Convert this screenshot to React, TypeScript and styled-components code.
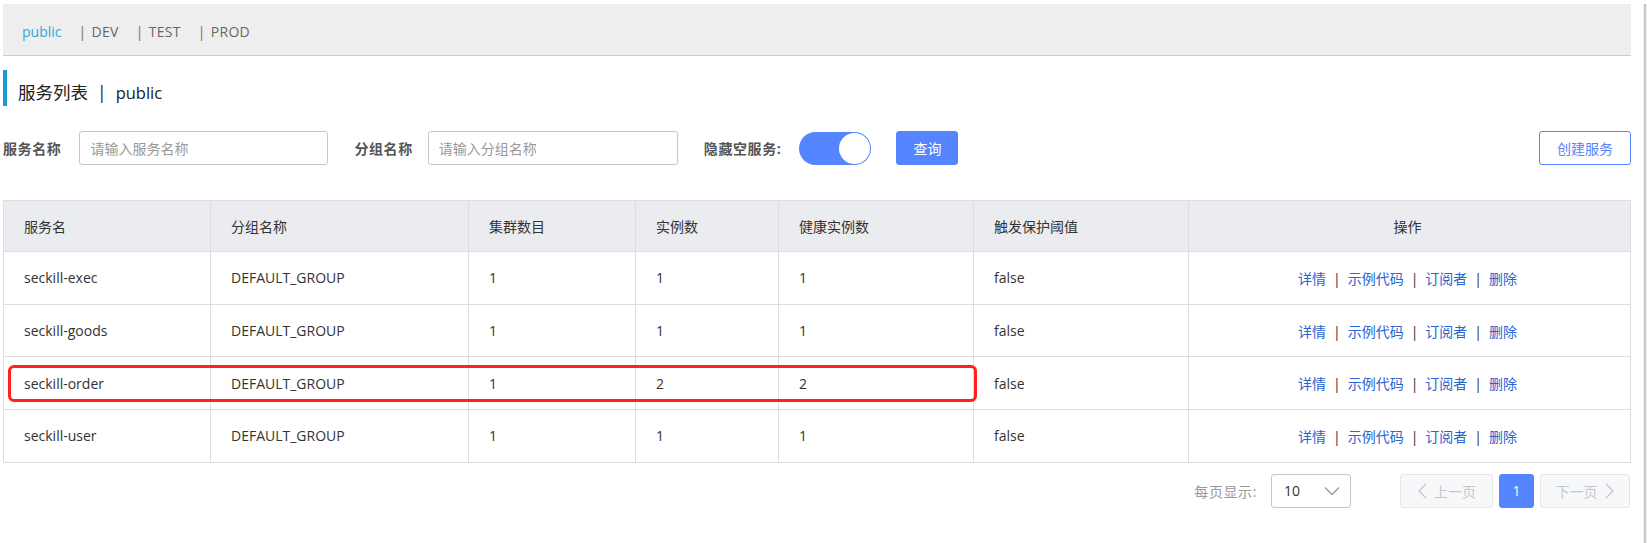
import React from 'react';
import styled, { createGlobalStyle } from 'styled-components';

const GlobalStyle = createGlobalStyle`
  html, body { margin: 0; padding: 0; background: #fff; }
  body {
    font-family: "Open Sans", "Noto Sans CJK SC", sans-serif;
    font-size: 14px;
    color: #333;
  }
  * { box-sizing: border-box; }
`;

const Page = styled.div`
  display: flex;
  width: 100%;
  height: 543px;
  overflow: hidden;
  background: #fff;
`;

const Main = styled.div`
  flex: 1;
  min-width: 0;
  padding: 4px 12px 0 3px;
`;

const Edge = styled.div`
  flex: 0 0 4px;
  margin-top: 4px;
  background: linear-gradient(to right, #f1f1f1 0 1px, #c8c8c8 1px 3px, #f1f1f1 3px 4px);
`;

const TopBar = styled.div`
  display: flex;
  align-items: center;
  gap: 17px;
  height: 52px;
  padding: 5px 0 0 19px;
  background: #eeeeee;
  border-bottom: 1px solid #cccccc;
`;

const Tab = styled.span<{ $active?: boolean }>`
  display: flex;
  align-items: center;
  font-size: 14px;
  line-height: 20px;
  letter-spacing: ${(p) => (p.$active ? '0' : '0.3px')};
  color: ${(p) => (p.$active ? '#2aa8dd' : '#666')};
  cursor: pointer;
`;

const TabPipe = styled.span`
  color: #8b6a45;
  margin-right: 5px;
`;

const Title = styled.div`
  margin-top: 14px;
  height: 36px;
  border-left: 4px solid #1a9bd7;
  padding: 10px 0 0 11px;
  font-size: 17.5px;
  line-height: 24px;
  color: #222;
`;

const TitlePipe = styled.span`
  margin: 0 9px;
`;

const TitleName = styled.span`
  font-size: 16.5px;
`;

const FilterRow = styled.div`
  display: flex;
  align-items: center;
  height: 34px;
  margin-top: 25px;
`;

const Label = styled.span<{ $gap: number }>`
  font-weight: 700;
  font-size: 14px;
  letter-spacing: 0.6px;
  color: #555;
  margin-right: ${(p) => p.$gap}px;
  white-space: nowrap;
`;

const Input = styled.input<{ $w: number }>`
  width: ${(p) => p.$w}px;
  height: 34px;
  margin-right: 26px;
  padding: 0 10px;
  border: 1px solid #c4c6cf;
  border-radius: 3px;
  font-family: inherit;
  font-size: 14px;
  color: #333;
  outline: none;
  &::placeholder { color: #999; }
`;

const Switch = styled.div`
  display: flex;
  justify-content: flex-end;
  align-items: center;
  width: 72px;
  height: 33px;
  padding: 1px;
  margin-right: 25px;
  border-radius: 17px;
  background: #5584ff;
`;

const Knob = styled.span`
  width: 31px;
  height: 31px;
  border-radius: 50%;
  background: #fff;
`;

const Button = styled.button<{ $outline?: boolean; $w: number }>`
  width: ${(p) => p.$w}px;
  height: 34px;
  padding: 0;
  border-radius: 3px;
  border: 1px solid #5584ff;
  background: ${(p) => (p.$outline ? '#fff' : '#5584ff')};
  color: ${(p) => (p.$outline ? '#5584ff' : '#fff')};
  font-family: inherit;
  font-size: 14px;
  cursor: pointer;
  ${(p) => (p.$outline ? 'margin-left: auto;' : '')}
`;

const TableWrap = styled.div`
  position: relative;
  margin-top: 35px;
`;

const Table = styled.table`
  width: 1627px;
  border-collapse: collapse;
  table-layout: fixed;
  font-size: 14px;
`;

const Th = styled.th<{ $center?: boolean }>`
  height: 51px;
  padding: ${(p) => (p.$center ? '0 4px 0 0' : '0 0 0 20px')};
  background: #ebecf0;
  border: 1px solid #dcdee3;
  font-weight: 400;
  color: #333;
  text-align: ${(p) => (p.$center ? 'center' : 'left')};
`;

const Td = styled.td<{ $center?: boolean }>`
  height: 52.7px;
  padding: ${(p) => (p.$center ? '0 4px 0 0' : '0 0 0 20px')};
  border: 1px solid #dcdee3;
  color: #333;
  text-align: ${(p) => (p.$center ? 'center' : 'left')};
  white-space: nowrap;
`;

const OpLink = styled.a`
  color: #2964d0;
  text-decoration: none;
  cursor: pointer;
`;

const OpPipe = styled.span`
  margin: 0 7px;
  color: #333;
`;

const Highlight = styled.div`
  position: absolute;
  left: 5px;
  top: 165px;
  width: 969px;
  height: 37px;
  border: 3px solid #ff2020;
  border-radius: 6px;
  pointer-events: none;
`;

const Pager = styled.div`
  display: flex;
  justify-content: flex-end;
  align-items: center;
  height: 34px;
  margin-top: 11px;
  padding-right: 1px;
`;

const PagerLabel = styled.span`
  color: #999;
  letter-spacing: 0.6px;
  margin-right: 14px;
`;

const Select = styled.div`
  display: flex;
  align-items: center;
  justify-content: space-between;
  width: 80px;
  height: 34px;
  padding: 0 10px 0 12px;
  margin-right: 43px;
  border: 1px solid #c4c6cf;
  border-radius: 3px;
  color: #333;
`;

const PageBtn = styled.div<{ $w: number; $active?: boolean }>`
  display: flex;
  align-items: center;
  justify-content: center;
  gap: 7px;
  width: ${(p) => p.$w}px;
  height: 34px;
  margin-left: 6px;
  border-radius: 3px;
  border: 1px solid ${(p) => (p.$active ? '#5584ff' : '#e6e7eb')};
  background: ${(p) => (p.$active ? '#5584ff' : '#f7f8fa')};
  color: ${(p) => (p.$active ? '#fff' : '#c4c6cf')};
`;

const Down = () => (
  <svg width="16" height="10" viewBox="0 0 16 10" fill="none">
    <polyline points="1,1.5 8,8.5 15,1.5" stroke="#999" strokeWidth="1.3" />
  </svg>
);

const Chevron = ({ dir }: { dir: 'left' | 'right' }) => (
  <svg width="10" height="16" viewBox="0 0 10 16" fill="none">
    <polyline
      points={dir === 'left' ? '9,1 2,8 9,15' : '1,1 8,8 1,15'}
      stroke="#c4c6cf"
      strokeWidth="1.4"
    />
  </svg>
);

const rows = [
  { name: 'seckill-exec', cluster: 1, inst: 1, healthy: 1 },
  { name: 'seckill-goods', cluster: 1, inst: 1, healthy: 1 },
  { name: 'seckill-order', cluster: 1, inst: 2, healthy: 2 },
  { name: 'seckill-user', cluster: 1, inst: 1, healthy: 1 },
];

const colWidths = [207, 258, 167, 143, 195, 215, 442];

export default function App() {
  return (
    <>
      <GlobalStyle />
      <Page>
        <Main>
          <TopBar>
            <Tab $active>public</Tab>
            {['DEV', 'TEST', 'PROD'].map((t) => (
              <Tab key={t}>
                <TabPipe>|</TabPipe>
                {t}
              </Tab>
            ))}
          </TopBar>

          <Title>
            服务列表<TitlePipe>|</TitlePipe>
            <TitleName>public</TitleName>
          </Title>

          <FilterRow>
            <Label $gap={18}>服务名称</Label>
            <Input $w={249} placeholder="请输入服务名称" />
            <Label $gap={15}>分组名称</Label>
            <Input $w={250} placeholder="请输入分组名称" />
            <Label $gap={18}>隐藏空服务:</Label>
            <Switch role="switch" aria-checked="true">
              <Knob />
            </Switch>
            <Button $w={62}>查询</Button>
            <Button $w={92} $outline>
              创建服务
            </Button>
          </FilterRow>

          <TableWrap>
            <Table>
              <colgroup>
                {colWidths.map((w, i) => (
                  <col key={i} style={{ width: w }} />
                ))}
              </colgroup>
              <thead>
                <tr>
                  <Th>服务名</Th>
                  <Th>分组名称</Th>
                  <Th>集群数目</Th>
                  <Th>实例数</Th>
                  <Th>健康实例数</Th>
                  <Th>触发保护阈值</Th>
                  <Th $center>操作</Th>
                </tr>
              </thead>
              <tbody>
                {rows.map((r) => (
                  <tr key={r.name}>
                    <Td>{r.name}</Td>
                    <Td>DEFAULT_GROUP</Td>
                    <Td>{r.cluster}</Td>
                    <Td>{r.inst}</Td>
                    <Td>{r.healthy}</Td>
                    <Td>false</Td>
                    <Td $center>
                      <OpLink>详情</OpLink>
                      <OpPipe>|</OpPipe>
                      <OpLink>示例代码</OpLink>
                      <OpPipe>|</OpPipe>
                      <OpLink>订阅者</OpLink>
                      <OpPipe>|</OpPipe>
                      <OpLink>删除</OpLink>
                    </Td>
                  </tr>
                ))}
              </tbody>
            </Table>
            <Highlight />
          </TableWrap>

          <Pager>
            <PagerLabel>每页显示:</PagerLabel>
            <Select>
              <span>10</span>
              <Down />
            </Select>
            <PageBtn $w={93}>
              <Chevron dir="left" />
              上一页
            </PageBtn>
            <PageBtn $w={35} $active>
              1
            </PageBtn>
            <PageBtn $w={90}>
              下一页
              <Chevron dir="right" />
            </PageBtn>
          </Pager>
        </Main>
        <Edge />
      </Page>
    </>
  );
}
